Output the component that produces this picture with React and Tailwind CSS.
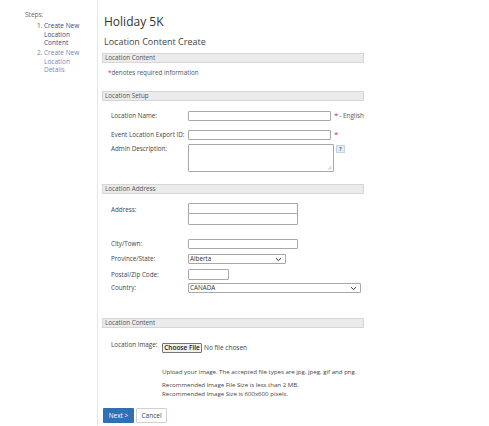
import React from "react";

const Bar = ({ children, className = "" }) => (
  <div className={`h-[10px] w-[262px] border border-[#d6d6d6] bg-[#ebebeb] pl-[2px] text-[6.3px] leading-[8px] text-[#555] ${className}`}>
    {children}
  </div>
);

const Label = ({ children, className = "" }) => (
  <div className={`w-[86px] shrink-0 whitespace-nowrap pl-[9px] text-[6.3px] leading-[10px] text-[#444] ${className}`}>{children}</div>
);

const Input = ({ w, h = 10, className = "" }) => (
  <div className={`border border-[#a8a8a8] bg-white rounded-[1px] ${className}`} style={{ width: w, height: h }} />
);

const Chevron = () => (
  <svg width="7" height="5" viewBox="0 0 7 5" className="ml-auto mr-[3px]">
    <path d="M1 1.2 L3.5 3.6 L6 1.2" fill="none" stroke="#333" strokeWidth="1" />
  </svg>
);

const Select = ({ w, value }) => (
  <div className="flex h-[10px] items-center border border-[#a8a8a8] bg-white pl-[1px] text-[6.3px] leading-[8px] text-[#333] rounded-[1px]" style={{ width: w }}>
    <span>{value}</span>
    <Chevron />
  </div>
);

const Star = () => <span className="ml-[3px] self-start text-[8px] leading-[8px] text-[#e03030]">*</span>;

export default function App() {
  return (
    <div className="flex h-[426px] w-[489px] bg-white text-[6.5px] leading-[10px] text-[#333]" style={{ fontFamily: '"Open Sans", "Noto Sans", sans-serif' }}>
      {/* Sidebar */}
      <div className="w-[98px] shrink-0 border-r border-[#e6e6e6] pl-[25px] pt-[11px]">
        <div className="text-[6.5px] leading-[8px] text-[#666]">Steps:</div>
        <div className="mt-[3px] flex pl-[12px] text-[6.5px] leading-[8.5px]">
          <span className="w-[7px] text-[#555]">1.</span>
          <span className="text-[#2b4f8f]">Create New<br />Location<br />Content</span>
        </div>
        <div className="mt-[1.5px] flex pl-[12px] text-[6.5px] leading-[8.5px]">
          <span className="w-[7px] text-[#888]">2.</span>
          <span className="text-[#6b8fc7]">Create New<br />Location<br />Details</span>
        </div>
      </div>

      {/* Main */}
      <div className="flex flex-col pl-[4px]">
        <div className="mt-[14px] pl-[2px] text-[12px] leading-[16px] text-[#333]">Holiday 5K</div>
        <div className="mt-[6px] pl-[2px] text-[9px] leading-[12px] text-[#444]">Location Content Create</div>
        <Bar className="mt-[5px]">Location Content</Bar>
        <div className="mt-[5px] pl-[6px] text-[6.3px] leading-[10px] text-[#555]">
          <span className="text-[#e03030]">*</span>denotes required information
        </div>

        <Bar className="mt-[13px]">Location Setup</Bar>

        <div className="mt-[10px] flex items-center">
          <Label>Location Name:</Label>
          <Input w={143} />
          <Star />
          <span className="ml-[1px] text-[6.3px] text-[#555]">- English</span>
        </div>
        <div className="mt-[9px] flex items-center">
          <Label>Event Location Export ID:</Label>
          <Input w={143} />
          <Star />
        </div>
        <div className="mt-[4px] flex items-start">
          <Label>Admin Description:</Label>
          <div className="relative h-[28px] w-[146px] border border-[#a8a8a8] bg-white rounded-[1px]">
            <svg width="5" height="5" viewBox="0 0 5 5" className="absolute bottom-[1px] right-[1px]">
              <path d="M4.5 1 L1 4.5 M4.5 3 L3 4.5" stroke="#999" strokeWidth="0.6" />
            </svg>
          </div>
          <div className="ml-[2px] mt-[1px] flex h-[8px] w-[9px] items-center justify-center border border-[#c5d3df] bg-[#e4edf5] text-[5px] font-bold leading-none text-[#4a6a8a]">?</div>
        </div>

        <Bar className="mt-[12px]">Location Address</Bar>

        <div className="mt-[9px] flex items-start">
          <Label className="pt-[2px]">Address:</Label>
          <div className="flex flex-col">
            <Input w={110} h={11} />
            <Input w={110} h={12} className="-mt-[1px]" />
          </div>
        </div>
        <div className="mt-[14px] flex items-center">
          <Label>City/Town:</Label>
          <Input w={110} h={10} />
        </div>
        <div className="mt-[5px] flex items-center">
          <Label>Province/State:</Label>
          <Select w={98} value="Alberta" />
        </div>
        <div className="mt-[5px] flex items-center">
          <Label>Postal/Zip Code:</Label>
          <Input w={41} h={11} />
        </div>
        <div className="mt-[3px] flex items-center">
          <Label>Country:</Label>
          <Select w={173} value="CANADA" />
        </div>

        <Bar className="mt-[25px]">Location Content</Bar>

        <div className="mt-[12px] flex items-start">
          <div className="w-[60px] shrink-0 whitespace-nowrap pl-[9px] text-[6.3px] leading-[10px] text-[#444]">Location Image:</div>
          <div className="flex flex-col pt-[3px]">
            <div className="flex items-center">
              <div className="flex h-[10px] w-[40px] items-center justify-center border border-[#767676] bg-[#efefef] text-[6.5px] font-semibold leading-none text-[#222] rounded-[1px]">Choose File</div>
              <span className="ml-[2px] text-[6.5px] text-[#444]">No file chosen</span>
            </div>
            <div className="mt-[14px] text-[6.1px] leading-[9px] text-[#444]">Upload your image. The accepted file types are jpg, jpeg, gif and png.</div>
            <div className="mt-[4px] text-[6.1px] leading-[9px] text-[#444]">Recommended Image File Size is less than 2 MB.<br />Recommended Image Size is 600x600 pixels.</div>
          </div>
        </div>

        <div className="mt-[10px] flex gap-[2px] pl-[1px]">
          <div className="flex h-[15px] w-[31px] items-center justify-center bg-[#2f6fb4] text-[6.5px] text-white rounded-[1px]">Next &gt;</div>
          <div className="flex h-[15px] w-[31px] items-center justify-center border border-[#d0d0d0] bg-white text-[6.5px] text-[#444] rounded-[1px]">Cancel</div>
        </div>
      </div>
    </div>
  );
}
